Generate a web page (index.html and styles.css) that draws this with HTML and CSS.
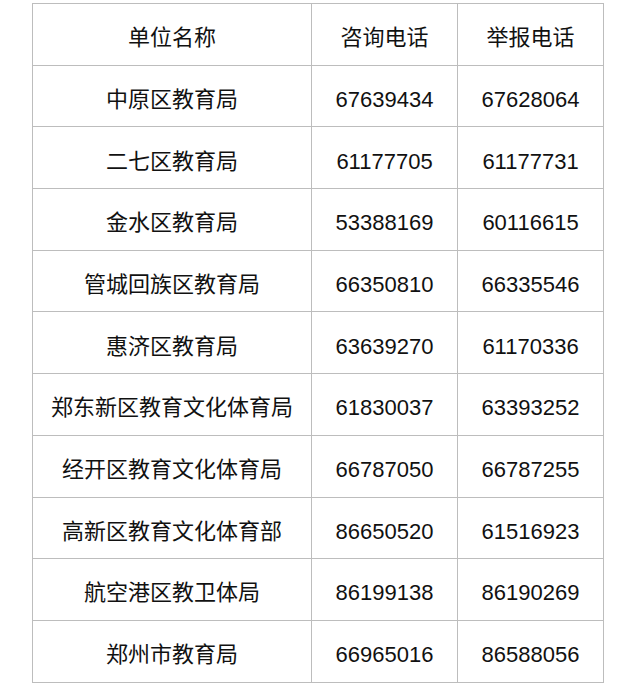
FILE: index.html
```html
<!DOCTYPE html>
<html lang="zh-CN">
<head>
<meta charset="utf-8">
<title>郑州市各区教育局电话</title>
<link rel="stylesheet" href="styles.css">
</head>
<body>
<table class="phone-table">
  <colgroup>
    <col class="col-name">
    <col class="col-tel">
    <col class="col-tel">
  </colgroup>
  <thead>
    <tr><th>单位名称</th><th>咨询电话</th><th>举报电话</th></tr>
  </thead>
  <tbody>
    <tr><td>中原区教育局</td><td class="num">67639434</td><td class="num">67628064</td></tr>
    <tr><td>二七区教育局</td><td class="num">61177705</td><td class="num">61177731</td></tr>
    <tr><td>金水区教育局</td><td class="num">53388169</td><td class="num">60116615</td></tr>
    <tr><td>管城回族区教育局</td><td class="num">66350810</td><td class="num">66335546</td></tr>
    <tr><td>惠济区教育局</td><td class="num">63639270</td><td class="num">61170336</td></tr>
    <tr><td>郑东新区教育文化体育局</td><td class="num">61830037</td><td class="num">63393252</td></tr>
    <tr><td>经开区教育文化体育局</td><td class="num">66787050</td><td class="num">66787255</td></tr>
    <tr><td>高新区教育文化体育部</td><td class="num">86650520</td><td class="num">61516923</td></tr>
    <tr><td>航空港区教卫体局</td><td class="num">86199138</td><td class="num">86190269</td></tr>
    <tr><td>郑州市教育局</td><td class="num">66965016</td><td class="num">86588056</td></tr>
  </tbody>
</table>
</body>
</html>
```

FILE: styles.css
```css
html, body {
  margin: 0;
  padding: 0;
  background: #ffffff;
}

.phone-table {
  margin: 3px 0 0 32px;
  width: 572px;
  border-collapse: collapse;
  table-layout: fixed;
  font-family: "Liberation Sans", "Noto Sans CJK SC", sans-serif;
  font-size: 22px;
  color: #111111;
}

.col-name { width: 279px; }
.col-tel { width: 146px; }

.phone-table th,
.phone-table td {
  border: 1px solid #bdbdbd;
  height: 61.7px;
  padding: 8px 0 0 0;
  box-sizing: border-box;
  text-align: center;
  vertical-align: middle;
  font-weight: normal;
  white-space: nowrap;
  line-height: 1.2;
}
```
